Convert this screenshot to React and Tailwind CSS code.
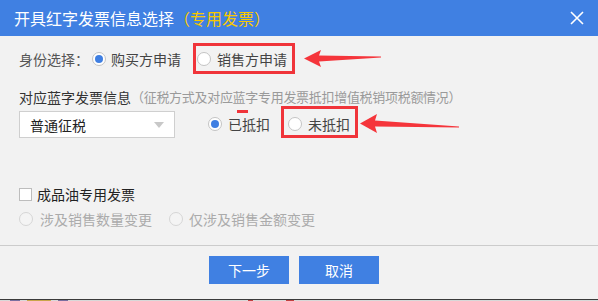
import React from 'react';

const font = { fontFamily: '"Noto Sans CJK SC", "Noto Sans", sans-serif' };

const Radio = ({ checked, disabled }) => (
  <span
    className={`flex h-[14px] w-[14px] shrink-0 items-center justify-center rounded-full border ${
      disabled ? 'border-[#d6d6d6] bg-[#f4f4f4]' : 'border-[#c4c4c4] bg-white'
    }`}
  >
    {checked && <span className="h-[8px] w-[8px] rounded-full bg-[#3f7fe2]" />}
  </span>
);

const Arrow = ({ w, h, tilt }) => (
  <svg width={w} height={h} viewBox={`0 0 ${w} ${h}`} className="shrink-0">
    <polygon
      points={`0,${h / 2} 17,0 15,${h / 2 - 3} ${w},${h / 2 + tilt - 1} ${w},${h / 2 + tilt} 15,${h / 2 + 3} 17,${h}`}
      fill="#f5353b"
    />
  </svg>
);

export default function App() {
  return (
    <div className="h-[301px] w-[598px] overflow-hidden bg-[#f2f2f2]" style={font}>
      {/* title bar */}
      <div className="flex h-[36px] items-center justify-between bg-[#4080e2] pl-[14px] pr-[14px]">
        <div className="text-[16px] leading-[20px] text-white">
          开具红字发票信息选择<span className="text-[#f8c800]">（专用发票）</span>
        </div>
        <svg width="14" height="14" viewBox="0 0 14 14">
          <path d="M1 1 L13 13 M13 1 L1 13" stroke="white" strokeWidth="1.6" />
        </svg>
      </div>

      <div className="pl-[19px]">
        {/* identity */}
        <div className="mt-[7px] flex h-[31px] items-center text-[14px] leading-[20px]">
          <span className="w-[73px] text-[#555]">身份选择：</span>
          <Radio checked />
          <span className="ml-[5px] text-[#444]">购买方申请</span>
          <div className="ml-[12px] flex h-[31px] items-center border-[3px] border-[#f0343a] pl-[1px] pr-[5px]">
            <Radio />
            <span className="ml-[6px] text-[#444]">销售方申请</span>
          </div>
          <div className="ml-[9px]">
            <Arrow w={77} h={17} tilt={-1} />
          </div>
        </div>

        <div className="mt-[13px] flex items-center leading-[20px]">
          <span className="text-[14px] text-[#333]">对应蓝字发票信息</span>
          <span className="text-[13px] tracking-[-0.3px] text-[#9a9a9a]">（征税方式及对应蓝字专用发票抵扣增值税销项税额情况）</span>
        </div>

        <div className="mt-[-1px] flex h-[32px] items-start text-[14px] leading-[20px]">
          <div className="mt-[5px] flex h-[27px] w-[156px] items-center justify-between border border-[#cfcfcf] bg-white pl-[10px] pr-[10px]">
            <span className="text-[#222]">普通征税</span>
            <svg width="10" height="6" viewBox="0 0 10 6">
              <polygon points="0,0 10,0 5,6" fill="#c8c8c8" />
            </svg>
          </div>
          <div className="mt-[8px] ml-[33px] flex items-center">
            <Radio checked />
            <span className="relative ml-[6px] text-[#444]">
              已抵扣
              <span className="absolute left-[9px] top-[-4px] h-[3px] w-[11px] bg-[#f0343a]" />
            </span>
          </div>
          <div className="ml-[11px] flex h-[32px] items-center border-[3px] border-[#f0343a] pl-[4px] pr-[5px] pt-[4px]">
            <Radio />
            <span className="ml-[6px] text-[#444]">未抵扣</span>
          </div>
          <div className="ml-[2px] mt-[8px]">
            <Arrow w={99} h={19} tilt={4} />
          </div>
        </div>

        <div className="mt-[46px] flex h-[20px] items-center text-[14px] leading-[20px]">
          <span className="h-[13px] w-[13px] border border-[#bdbdbd] bg-white" />
          <span className="ml-[5px] text-[#222]">成品油专用发票</span>
        </div>

        <div className="mt-[5px] flex h-[20px] items-center text-[14px] leading-[20px] text-[#ababab]">
          <Radio disabled />
          <span className="ml-[7px]">涉及销售数量变更</span>
          <span className="ml-[17px]">
            <Radio disabled />
          </span>
          <span className="ml-[6px]">仅涉及销售金额变更</span>
        </div>
      </div>

      <div className="mt-[16px] border-t border-[#cccccc]" />

      <div className="flex h-[53px] gap-[10px] pl-[209px] pt-[10px]">
        <button className="h-[28px] w-[80px] bg-[#4080e2] text-[14px] text-white">下一步</button>
        <button className="h-[28px] w-[80px] bg-[#4080e2] text-[14px] text-white">取消</button>
      </div>

      <div className="h-[1px] bg-[#3a3a3a]" />
      <div className="flex h-[2px] bg-[#d8d8d8]">
        <span className="ml-[10px] w-[10px] bg-[#7a6fa0]" />
        <span className="ml-[7px] w-[24px] bg-[#c9a54a]" />
        <span className="ml-[7px] w-[10px] bg-[#7a6fa0]" />
        <span className="ml-[180px] w-[5px] bg-[#c04040]" />
        <span className="ml-[33px] w-[8px] bg-[#c04040]" />
      </div>
    </div>
  );
}
